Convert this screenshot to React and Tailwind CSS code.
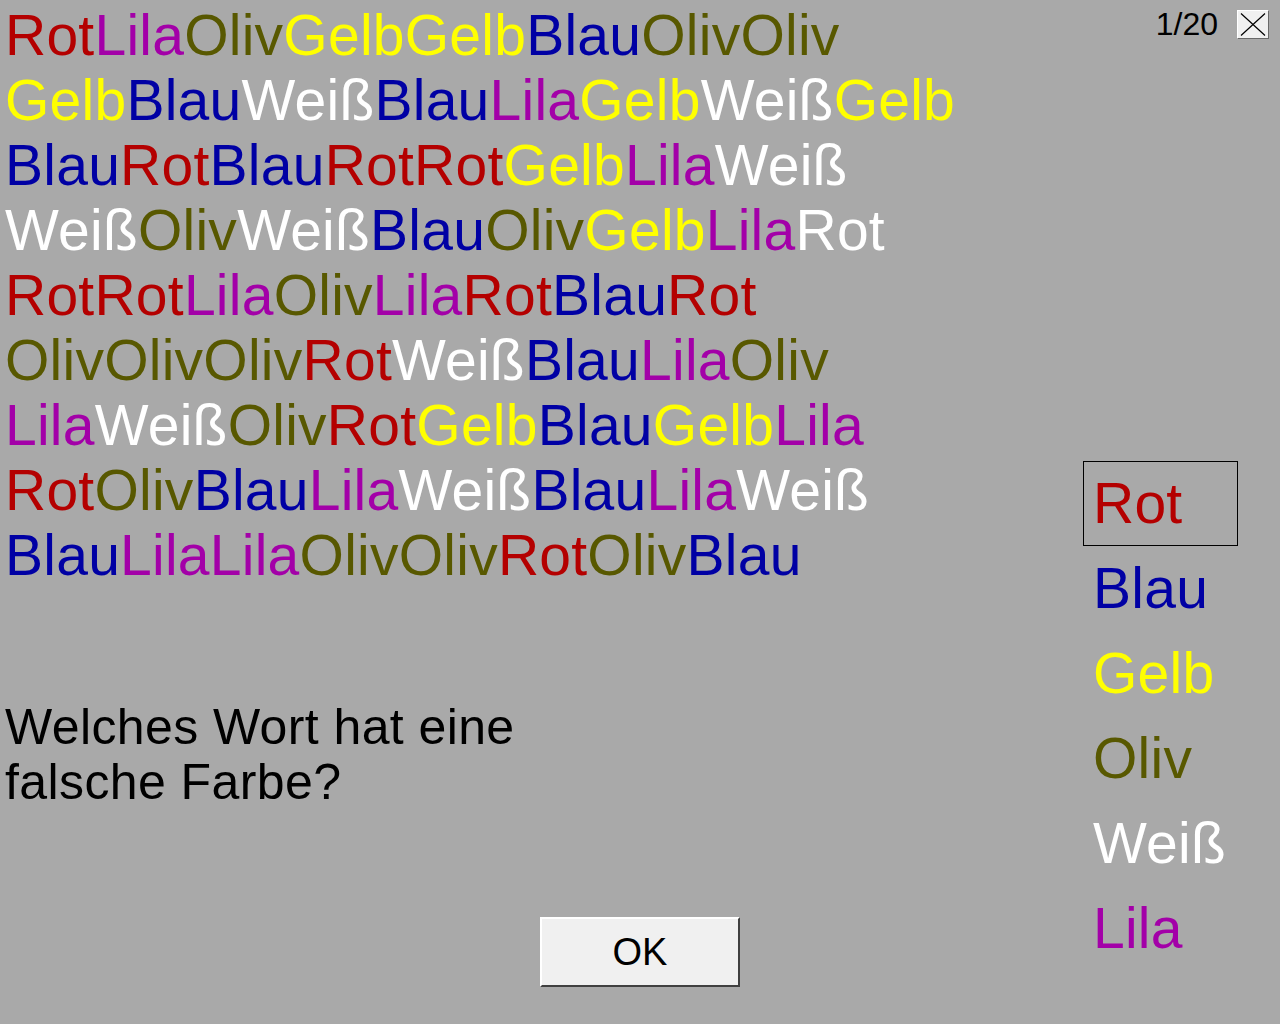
import React, { useState } from "react";

const colorClass = {
  rot: "text-[#b40000]",
  lila: "text-[#a300a8]",
  oliv: "text-[#585800]",
  gelb: "text-[#ffff00]",
  blau: "text-[#0000a4]",
  weiss: "text-white",
};

// [word, color]
const rows = [
  [["Rot", "rot"], ["Lila", "lila"], ["Oliv", "oliv"], ["Gelb", "gelb"], ["Gelb", "gelb"], ["Blau", "blau"], ["Oliv", "oliv"], ["Oliv", "oliv"]],
  [["Gelb", "gelb"], ["Blau", "blau"], ["Weiß", "weiss"], ["Blau", "blau"], ["Lila", "lila"], ["Gelb", "gelb"], ["Weiß", "weiss"], ["Gelb", "gelb"]],
  [["Blau", "blau"], ["Rot", "rot"], ["Blau", "blau"], ["Rot", "rot"], ["Rot", "rot"], ["Gelb", "gelb"], ["Lila", "lila"], ["Weiß", "weiss"]],
  [["Weiß", "weiss"], ["Oliv", "oliv"], ["Weiß", "weiss"], ["Blau", "blau"], ["Oliv", "oliv"], ["Gelb", "gelb"], ["Lila", "lila"], ["Rot", "weiss"]],
  [["Rot", "rot"], ["Rot", "rot"], ["Lila", "lila"], ["Oliv", "oliv"], ["Lila", "lila"], ["Rot", "rot"], ["Blau", "blau"], ["Rot", "rot"]],
  [["Oliv", "oliv"], ["Oliv", "oliv"], ["Oliv", "oliv"], ["Rot", "rot"], ["Weiß", "weiss"], ["Blau", "blau"], ["Lila", "lila"], ["Oliv", "oliv"]],
  [["Lila", "lila"], ["Weiß", "weiss"], ["Oliv", "oliv"], ["Rot", "rot"], ["Gelb", "gelb"], ["Blau", "blau"], ["Gelb", "gelb"], ["Lila", "lila"]],
  [["Rot", "rot"], ["Oliv", "oliv"], ["Blau", "blau"], ["Lila", "lila"], ["Weiß", "weiss"], ["Blau", "blau"], ["Lila", "lila"], ["Weiß", "weiss"]],
  [["Blau", "blau"], ["Lila", "lila"], ["Lila", "lila"], ["Oliv", "oliv"], ["Oliv", "oliv"], ["Rot", "rot"], ["Oliv", "oliv"], ["Blau", "blau"]],
];

const answers = [
  ["Rot", "rot"],
  ["Blau", "blau"],
  ["Gelb", "gelb"],
  ["Oliv", "oliv"],
  ["Weiß", "weiss"],
  ["Lila", "lila"],
];

export default function App() {
  const [selected, setSelected] = useState(0);

  return (
    <div className="flex h-[1024px] w-[1280px] overflow-hidden bg-[#a9a9a9] font-['Liberation_Sans',Arial,sans-serif] text-black">
      <main className="flex w-[1083px] flex-col pt-[3px]">
        <div className="pl-[5px] text-[57px] leading-[65px] tracking-[0.25px]">
          {rows.map((row, i) => (
            <div key={i} className="whitespace-nowrap">
              {row.map(([word, color], j) => (
                <span key={j} className={colorClass[color]}>
                  {word}
                </span>
              ))}
            </div>
          ))}
        </div>

        <p className="mt-[112px] w-[560px] pl-[5px] text-[50px] leading-[55px] tracking-[0.4px]">
          Welches Wort hat eine
          <br />
          falsche Farbe?
        </p>

        <button
          type="button"
          className="ml-[540px] mt-[107px] h-[70px] w-[200px] border-2 border-b-[#404040] border-l-white border-r-[#404040] border-t-white bg-[#f0f0f0] text-[38px] leading-none text-black"
        >
          OK
        </button>
      </main>

      <aside className="flex w-[197px] flex-col">
        <div className="flex h-[40px] items-start justify-end gap-[19px] pr-[11px] pt-[8px]">
          <span className="text-[32px] leading-[32px]">1/20</span>
          <button
            type="button"
            className="mt-[2px] flex h-[29px] w-[32px] items-center justify-center border border-b-[#696969] border-l-white border-r-[#696969] border-t-white bg-[#f0f0f0]"
          >
            <svg width="26" height="23" viewBox="0 0 26 23">
              <path d="M1 0.5 L25 22.5 M25 0.5 L1 22.5" stroke="black" strokeWidth="1.2" fill="none" />
            </svg>
          </button>
        </div>

        <ul className="mt-[421px]">
          {answers.map(([word, color], i) => (
            <li key={i}>
              <button
                type="button"
                onClick={() => setSelected(i)}
                className={`block h-[85px] w-[155px] border pl-[9px] text-left text-[57px] leading-[83px] tracking-[0.25px] ${
                  selected === i ? "border-black" : "border-transparent"
                } ${colorClass[color]}`}
              >
                {word}
              </button>
            </li>
          ))}
        </ul>
      </aside>
    </div>
  );
}
